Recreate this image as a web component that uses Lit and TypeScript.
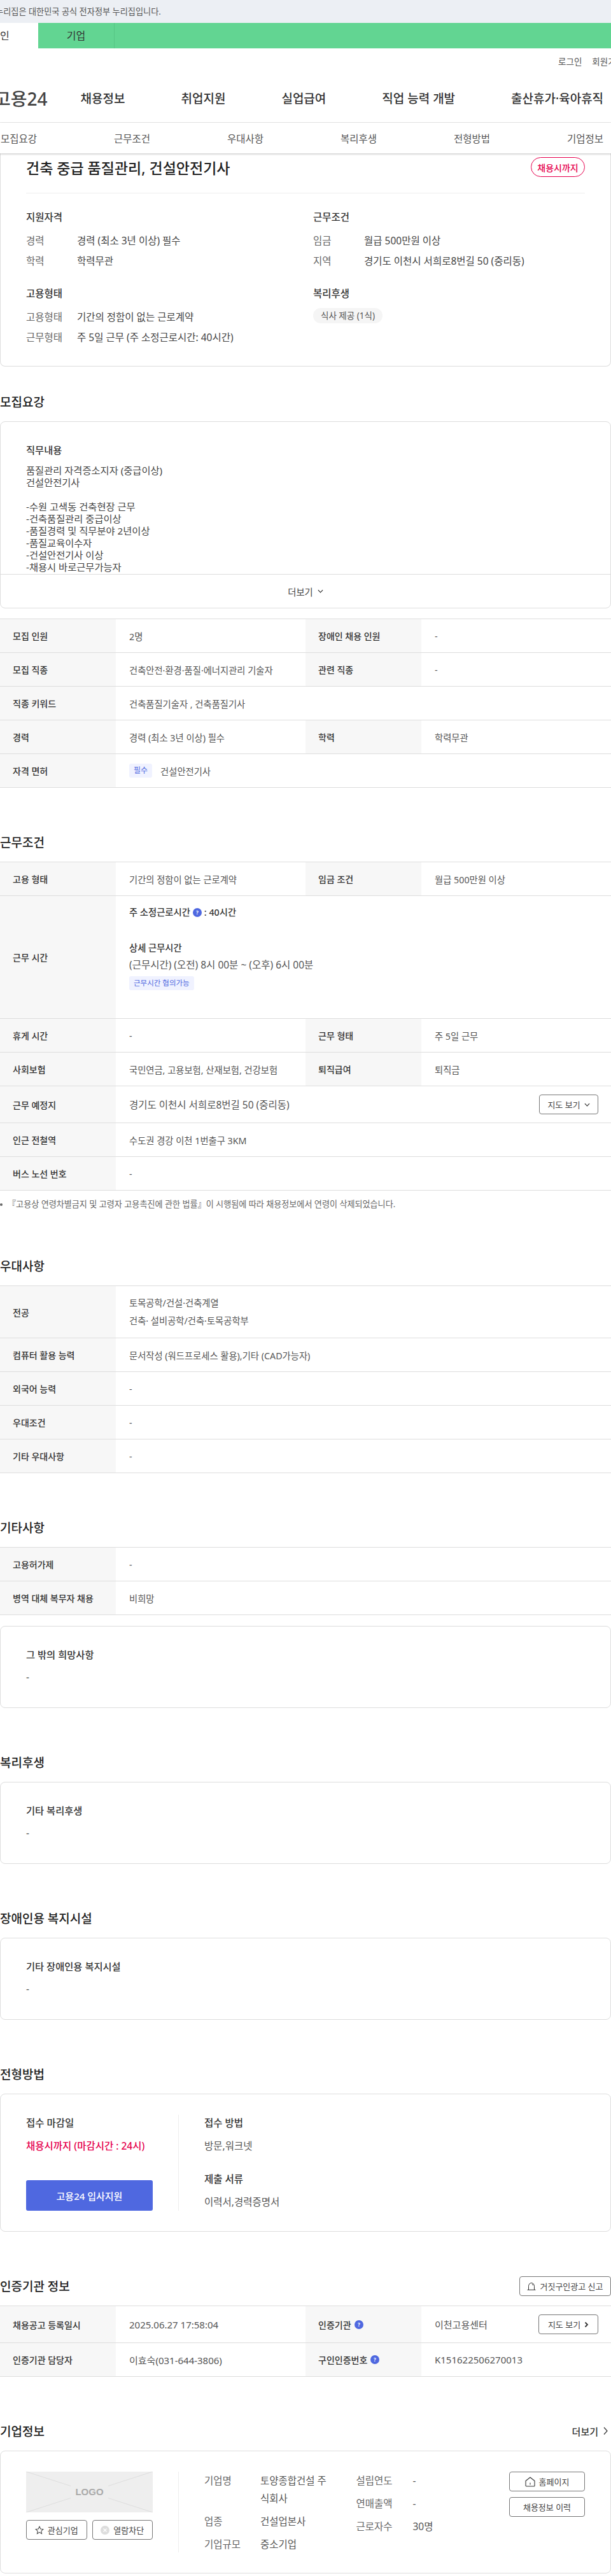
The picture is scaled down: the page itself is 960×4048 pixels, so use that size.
import {html, css, LitElement, TemplateResult} from 'lit';
import {customElement} from 'lit/decorators.js';

const qIcon = html`<svg class="q" viewBox="0 0 14 14" width="14" height="14"><circle cx="7" cy="7" r="7" fill="#4f68e0"/><text x="7" y="10" text-anchor="middle" font-size="8" font-weight="700" fill="#fff">?</text></svg>`;
const chevDown = html`<svg viewBox="0 0 10 6" width="9" height="6"><path d="M1 1l4 4 4-4" fill="none" stroke="#333" stroke-width="1.300"/></svg>`;
const chevBold = html`<svg viewBox="0 0 7 10" width="7" height="10"><path d="M1.500 1.500L5 5 1.500 8.500" fill="none" stroke="#333" stroke-width="1.800"/></svg>`;
const chevThin = html`<svg viewBox="0 0 7 14" width="7" height="14"><path d="M1 1.500L6 7l-5 5.500" fill="none" stroke="#333" stroke-width="1.200"/></svg>`;
const homeIcon = html`<svg viewBox="0 0 16 16" width="16" height="16"><path d="M1 14V6.500L8 1l7 5.500V14a1 1 0 0 1-1 1H2a1 1 0 0 1-1-1z" fill="none" stroke="#333" stroke-width="1.100" stroke-linejoin="round"/><path d="M8 9.500V12.500" stroke="#333" stroke-width="1.100"/></svg>`;
const bellIcon = html`<svg viewBox="0 0 14 13" width="14" height="13"><path d="M2.500 12V6.500a4.500 5 0 0 1 9 0V12M.500 12.400h13M8 3.300a2.500 2.500 0 0 1 1.500 2" fill="none" stroke="#333" stroke-width="1"/></svg>`;

type Row = [string, unknown, unknown?, unknown?];

@customElement('app-root')
export class AppRoot extends LitElement {
  static styles = css`
    :host {
      display: block;
      width: 960px;
      overflow: hidden;
      background: #fff;
      color: #333;
      font-family: "Noto Sans", "Noto Sans CJK KR", sans-serif;
      font-size: 15.5px;
    }
    .strip { height: 36px; background: #eceff4; font-size: 13.200px; color: #555; line-height: 36px; margin-left: -7px; white-space: nowrap; }
    .green { height: 40px; background: #62d592; display: flex; font-size: 16px; line-height: 40px; color: #333; }
    .green .me { width: 120px; margin-left: -60px; background: #fff; text-align: center; }
    .green .biz { width: 120px; text-align: center; border-right: 1px solid #56c684; box-sizing: border-box; }
    .util { height: 40px; display: flex; gap: 16px; justify-content: flex-end; align-items: center; font-size: 13.500px; color: #555; margin-right: -20px; }
    .util span { white-space: nowrap; }
    .gnb { height: 76px; display: flex; align-items: center; gap: 88px; font-size: 19px; font-weight: 500; color: #333; white-space: nowrap; border-bottom: 1px solid #eee; }
    .logo { font-size: 28px; font-weight: 500; color: #444; margin-left: -9px; margin-right: -36px; }
    .tabs { height: 48px; display: flex; justify-content: space-between; align-items: center; position: relative; z-index: 2; background: #fff; box-shadow: 0 1px 3px rgba(0,0,0,.25); color: #555; padding: 0 12px 0 1px; }
    .card { border: 1px solid #ddd; border-radius: 8px; box-sizing: border-box; }
    .top { border-top: 0; border-radius: 0 0 8px 8px; height: 335px; padding: 6px 40px 0; }
    .headrow { display: flex; justify-content: space-between; align-items: center; height: 31px; padding-bottom: 25px; border-bottom: 1px solid #eee; }
    .headrow h1 { margin: 0; font-size: 23px; font-weight: 500; color: #222; }
    .badge { height: 31px; width: 85px; box-sizing: border-box; border: 1px solid #e6004d; border-radius: 16px; color: #e6004d; font-size: 14px; font-weight: 500; display: flex; align-items: center; justify-content: center; }
    .sum { display: grid; grid-template-columns: 451px 1fr; row-gap: 24px; padding-top: 25px; }
    .sum h3 { margin: 0 0 8px; font-size: 15.500px; font-weight: 500; line-height: 24px; color: #333; }
    .kv { display: flex; height: 32px; align-items: center; color: #444; }
    .kv b { width: 80px; font-weight: 400; color: #666; }
    .chip { display: inline-block; margin-top: 3px; height: 24px; line-height: 24px; padding: 0 12px; background: #f5f5f5; border-radius: 12px; font-size: 13.500px; color: #555; }

    .sec { margin-top: 70px; }
    .sec.first { margin-top: 40px; }
    .title { display: flex; justify-content: space-between; align-items: center; height: 30px; margin-bottom: 16px; }
    .title h2 { margin: 0; font-size: 19px; font-weight: 500; color: #222; }
    .more { display: flex; align-items: center; gap: 8px; font-size: 15px; font-weight: 500; margin-right: 5px; }

    .job { height: 294px; display: flex; flex-direction: column; }
    .job .in { flex: 1; padding: 32px 40px 0; overflow: hidden; }
    .job h4, .box h4 { margin: 0 0 11px; line-height: 24px; font-size: 15.300px; font-weight: 500; }
    .job p { margin: 0; line-height: 19px; font-size: 15.300px; color: #444; white-space: pre-line; }
    .job .foot { height: 52px; border-top: 1px solid #ddd; display: flex; align-items: center; justify-content: center; gap: 7px; font-size: 14.300px; color: #444; }

    .tbl { border-top: 1px solid #ddd; font-size: 14.300px; }
    .tbl.gap { margin-top: 16px; }
    .tbl.cert { font-size: 15px; }
    .row { display: grid; grid-template-columns: 182px 298px 182px 298px; border-bottom: 1px solid #ddd; min-height: 52px; }
    .row.wide { grid-template-columns: 182px 778px; }
    .th { background: #f7f7f7; padding-left: 20px; font-size: 14px; font-weight: 500; color: #333; display: flex; align-items: center; gap: 5px; box-sizing: border-box; }
    .td { padding-left: 21px; color: #555; display: flex; align-items: center; box-sizing: border-box; }
    .big { font-size: 15.500px; }
    .tag { background: #f0f2ff; color: #4f68e0; font-size: 12px; border-radius: 3px; height: 22px; line-height: 22px; padding: 0 7px; display: inline-block; }
    .tag.long { font-size: 11.500px; }
    .hours { display: block; padding-top: 13px; }
    .hours div { line-height: 26px; }
    .hours .b { font-weight: 500; color: #333; display: flex; align-items: center; gap: 4px; }
    .note { margin: 10px 0 0; height: 23px; line-height: 23px; font-size: 13.100px; color: #666; padding-left: 12px; position: relative; white-space: nowrap; }
    .note::before { content: ""; position: absolute; left: 0; top: 10px; width: 4px; height: 4px; border-radius: 50%; background: #666; }
    .btn { border: 1px solid #777; border-radius: 4px; background: #fff; display: inline-flex; align-items: center; justify-content: center; gap: 6px; height: 31px; box-sizing: border-box; font-size: 13px; font-weight: 400; color: #444; white-space: nowrap; }
    .sp { justify-content: space-between; padding-right: 20px; }
    .box { height: 129px; padding: 32px 40px 0; margin-top: 17px; }
    .box.nomt { margin-top: 0; }
    .box div { line-height: 24px; color: #555; }

    .apply { height: 217px; padding: 32px 40px; display: flex; }
    .apply .l { width: 199px; padding-right: 40px; border-right: 1px solid #eee; display: flex; flex-direction: column; }
    .apply .r { padding-left: 40px; }
    .apply .h { line-height: 26px; font-weight: 500; color: #333; }
    .apply .v { line-height: 26px; margin-top: 10px; color: #555; white-space: nowrap; }
    .apply .r .h2 { margin-top: 26px; }
    .pink { color: #e6004d !important; font-weight: 500; }
    .apply-btn { margin-top: auto; height: 48px; border-radius: 3px; background: #4f68e0; color: #fff; font-size: 15px; font-weight: 500; display: flex; align-items: center; justify-content: center; }

    .co { height: 193px; padding: 32px 40px; display: flex; }
    .co .l { width: 199px; padding-right: 40px; border-right: 1px solid #eee; }
    .logoimg { height: 64px; background: #eee; position: relative; display: flex; align-items: center; justify-content: center; }
    .logoimg svg { position: absolute; inset: 0; }
    .logoimg span { position: relative; background: #eee; padding: 0 7px; height: 20px; line-height: 20px; font-family: "Liberation Sans", sans-serif; font-size: 15px; font-weight: 700; color: #aaa; }
    .co .acts { display: flex; justify-content: space-between; margin-top: 12px; }
    .co .acts .btn { width: 95.500px; }
    .info { padding-left: 40px; display: grid; grid-template-columns: 88px 112px; align-content: start; }
    .info b { font-weight: 400; color: #666; line-height: 28px; padding-bottom: 8px; white-space: nowrap; }
    .info span { line-height: 28px; color: #555; padding-bottom: 8px; word-break: break-all; }
    .info.two { padding-left: 38.500px; grid-template-columns: 89px 60px; }
    .side { margin-left: auto; width: 119px; display: flex; flex-direction: column; gap: 9px; }
    .side .btn { width: 100%; }
  `;

  private row([a, b, c, d]: Row, cls = ''): TemplateResult {
    if (c === undefined) {
      return html`<div class="row wide ${cls}"><div class="th">${a}</div><div class="td">${b}</div></div>`;
    }
    return html`<div class="row ${cls}"><div class="th">${a}</div><div class="td">${b}</div><div class="th">${c}</div><div class="td">${d}</div></div>`;
  }

  render() {
    return html`
      <div class="strip">누리집은 대한민국 공식 전자정부 누리집입니다.</div>
      <div class="green"><div class="me">개인</div><div class="biz">기업</div></div>
      <div class="util"><span>로그인</span><span>회원가입</span></div>
      <div class="gnb">
        <span class="logo">고용24</span>
        <span>채용정보</span><span>취업지원</span><span>실업급여</span><span>직업 능력 개발</span><span>출산휴가·육아휴직</span>
      </div>
      <div class="tabs"><span>모집요강</span><span>근무조건</span><span>우대사항</span><span>복리후생</span><span>전형방법</span><span>기업정보</span></div>

      <div class="card top">
        <div class="headrow"><h1>건축 중급 품질관리, 건설안전기사</h1><span class="badge">채용시까지</span></div>
        <div class="sum">
          <div><h3>지원자격</h3>
            <div class="kv"><b>경력</b>경력 (최소 3년 이상) 필수</div>
            <div class="kv"><b>학력</b>학력무관</div></div>
          <div><h3>근무조건</h3>
            <div class="kv"><b>임금</b>월급 500만원 이상</div>
            <div class="kv"><b>지역</b>경기도 이천시 서희로8번길 50 (중리동)</div></div>
          <div><h3>고용형태</h3>
            <div class="kv"><b>고용형태</b>기간의 정함이 없는 근로계약</div>
            <div class="kv"><b>근무형태</b>주 5일 근무 (주 소정근로시간: 40시간)</div></div>
          <div><h3>복리후생</h3><span class="chip">식사 제공 (1식)</span></div>
        </div>
      </div>

      <section class="sec first">
        <div class="title"><h2>모집요강</h2></div>
        <div class="card job">
          <div class="in"><h4>직무내용</h4>
            <p>품질관리 자격증소지자 (중급이상)
건설안전기사

-수원 고색동 건축현장 근무
-건축품질관리 중급이상
-품질경력 및 직무분야 2년이상
-품질교육이수자
-건설안전기사 이상
-채용시 바로근무가능자</p></div>
          <div class="foot">더보기 ${chevDown}</div>
        </div>
        <div class="tbl gap">
          ${this.row(['모집 인원', '2명', '장애인 채용 인원', '-'])}
          ${this.row(['모집 직종', '건축안전·환경·품질·에너지관리 기술자', '관련 직종', '-'])}
          ${this.row(['직종 키워드', '건축품질기술자 , 건축품질기사'])}
          ${this.row(['경력', '경력 (최소 3년 이상) 필수', '학력', '학력무관'])}
          ${this.row(['자격 면허', html`<span class="tag" style="margin-right:13px">필수</span>건설안전기사`])}
        </div>
      </section>

      <section class="sec">
        <div class="title"><h2>근무조건</h2></div>
        <div class="tbl">
          ${this.row(['고용 형태', '기간의 정함이 없는 근로계약', '임금 조건', '월급 500만원 이상'])}
          <div class="row wide" style="height:192px">
            <div class="th">근무 시간</div>
            <div class="td hours">
              <div class="b">주 소정근로시간 ${qIcon} : 40시간</div>
              <div class="b" style="margin-top:30px">상세 근무시간</div>
              <div class="big">(근무시간) (오전) 8시 00분 ~ (오후) 6시 00분</div>
              <span class="tag long" style="margin-top:5px">근무시간 협의가능</span>
            </div>
          </div>
          ${this.row(['휴게 시간', '-', '근무 형태', '주 5일 근무'])}
          ${this.row(['사회보험', '국민연금, 고용보험, 산재보험, 건강보험', '퇴직급여', '퇴직금'])}
          <div class="row wide" style="height:57px">
            <div class="th">근무 예정지</div>
            <div class="td sp big">경기도 이천시 서희로8번길 50 (중리동)<span class="btn" style="width:93px">지도 보기 ${chevDown}</span></div>
          </div>
          ${this.row(['인근 전철역', '수도권 경강 이천 1번출구 3KM'])}
          ${this.row(['버스 노선 번호', '-'])}
        </div>
        <p class="note">『고용상 연령차별금지 및 고령자 고용촉진에 관한 법률』이 시행됨에 따라 채용정보에서 연령이 삭제되었습니다.</p>
      </section>

      <section class="sec">
        <div class="title"><h2>우대사항</h2></div>
        <div class="tbl">
          <div class="row wide" style="height:81px">
            <div class="th">전공</div>
            <div class="td" style="display:block;padding-top:13px;line-height:27.500px">토목공학/건설·건축계열<br>건축· 설비공학/건축·토목공학부</div>
          </div>
          ${this.row(['컴퓨터 활용 능력', '문서작성 (워드프로세스 활용),기타 (CAD가능자)'])}
          ${this.row(['외국어 능력', '-'])}
          ${this.row(['우대조건', '-'])}
          ${this.row(['기타 우대사항', '-'])}
        </div>
      </section>

      <section class="sec">
        <div class="title"><h2>기타사항</h2></div>
        <div class="tbl">
          ${this.row(['고용허가제', '-'])}
          ${this.row(['병역 대체 복무자 채용', '비희망'])}
        </div>
        <div class="card box"><h4>그 밖의 희망사항</h4><div>-</div></div>
      </section>

      <section class="sec">
        <div class="title"><h2>복리후생</h2></div>
        <div class="card box nomt"><h4>기타 복리후생</h4><div>-</div></div>
      </section>

      <section class="sec">
        <div class="title"><h2>장애인용 복지시설</h2></div>
        <div class="card box nomt"><h4>기타 장애인용 복지시설</h4><div>-</div></div>
      </section>

      <section class="sec">
        <div class="title"><h2>전형방법</h2></div>
        <div class="card apply">
          <div class="l">
            <div class="h">접수 마감일</div>
            <div class="v pink">채용시까지 (마감시간 : 24시)</div>
            <div class="apply-btn">고용24 입사지원</div>
          </div>
          <div class="r">
            <div class="h">접수 방법</div>
            <div class="v">방문,워크넷</div>
            <div class="h h2">제출 서류</div>
            <div class="v">이력서,경력증명서</div>
          </div>
        </div>
      </section>

      <section class="sec">
        <div class="title"><h2>인증기관 정보</h2><span class="btn" style="width:144px">${bellIcon} 거짓구인광고 신고</span></div>
        <div class="tbl cert">
          <div class="row" style="height:57px">
            <div class="th">채용공고 등록일시</div><div class="td">2025.06.27 17:58:04</div>
            <div class="th">인증기관 ${qIcon}</div>
            <div class="td sp">이천고용센터<span class="btn" style="width:94px">지도 보기 ${chevBold}</span></div>
          </div>
          ${this.row(['인증기관 담당자', '이효숙(031-644-3806)', html`구인인증번호 ${qIcon}`, 'K151622506270013'])}
        </div>
      </section>

      <section class="sec">
        <div class="title"><h2>기업정보</h2><span class="more">더보기 ${chevThin}</span></div>
        <div class="card co">
          <div class="l">
            <div class="logoimg">
              <svg viewBox="0 0 199 64" width="199" height="64" preserveAspectRatio="none"><path d="M0 0L199 64M199 0L0 64" stroke="#ddd"/></svg>
              <span>LOGO</span>
            </div>
            <div class="acts">
              <span class="btn"><svg viewBox="0 0 16 16" width="14" height="14"><path d="M8 1.500l2 4.300 4.700.6-3.500 3.200.9 4.700L8 11.900l-4.100 2.400.9-4.700L1.300 6.400 6 5.800z" fill="none" stroke="#444" stroke-width="1.200"/></svg>관심기업</span>
              <span class="btn"><svg viewBox="0 0 14 14" width="14" height="14"><circle cx="7" cy="7" r="7" fill="#ddd"/><path d="M4.500 4.500l5 5M9.500 4.500l-5 5" stroke="#fff" stroke-width="1.200"/></svg>열람차단</span>
            </div>
          </div>
          <div class="info">
            <b>기업명</b><span>토양종합건설 주식회사</span>
            <b>업종</b><span>건설업본사</span>
            <b>기업규모</b><span>중소기업</span>
          </div>
          <div class="info two">
            <b>설립연도</b><span>-</span>
            <b>연매출액</b><span>-</span>
            <b>근로자수</b><span>30명</span>
          </div>
          <div class="side">
            <span class="btn">${homeIcon}홈페이지</span>
            <span class="btn">채용정보 이력</span>
          </div>
        </div>
      </section>
    `;
  }
}
